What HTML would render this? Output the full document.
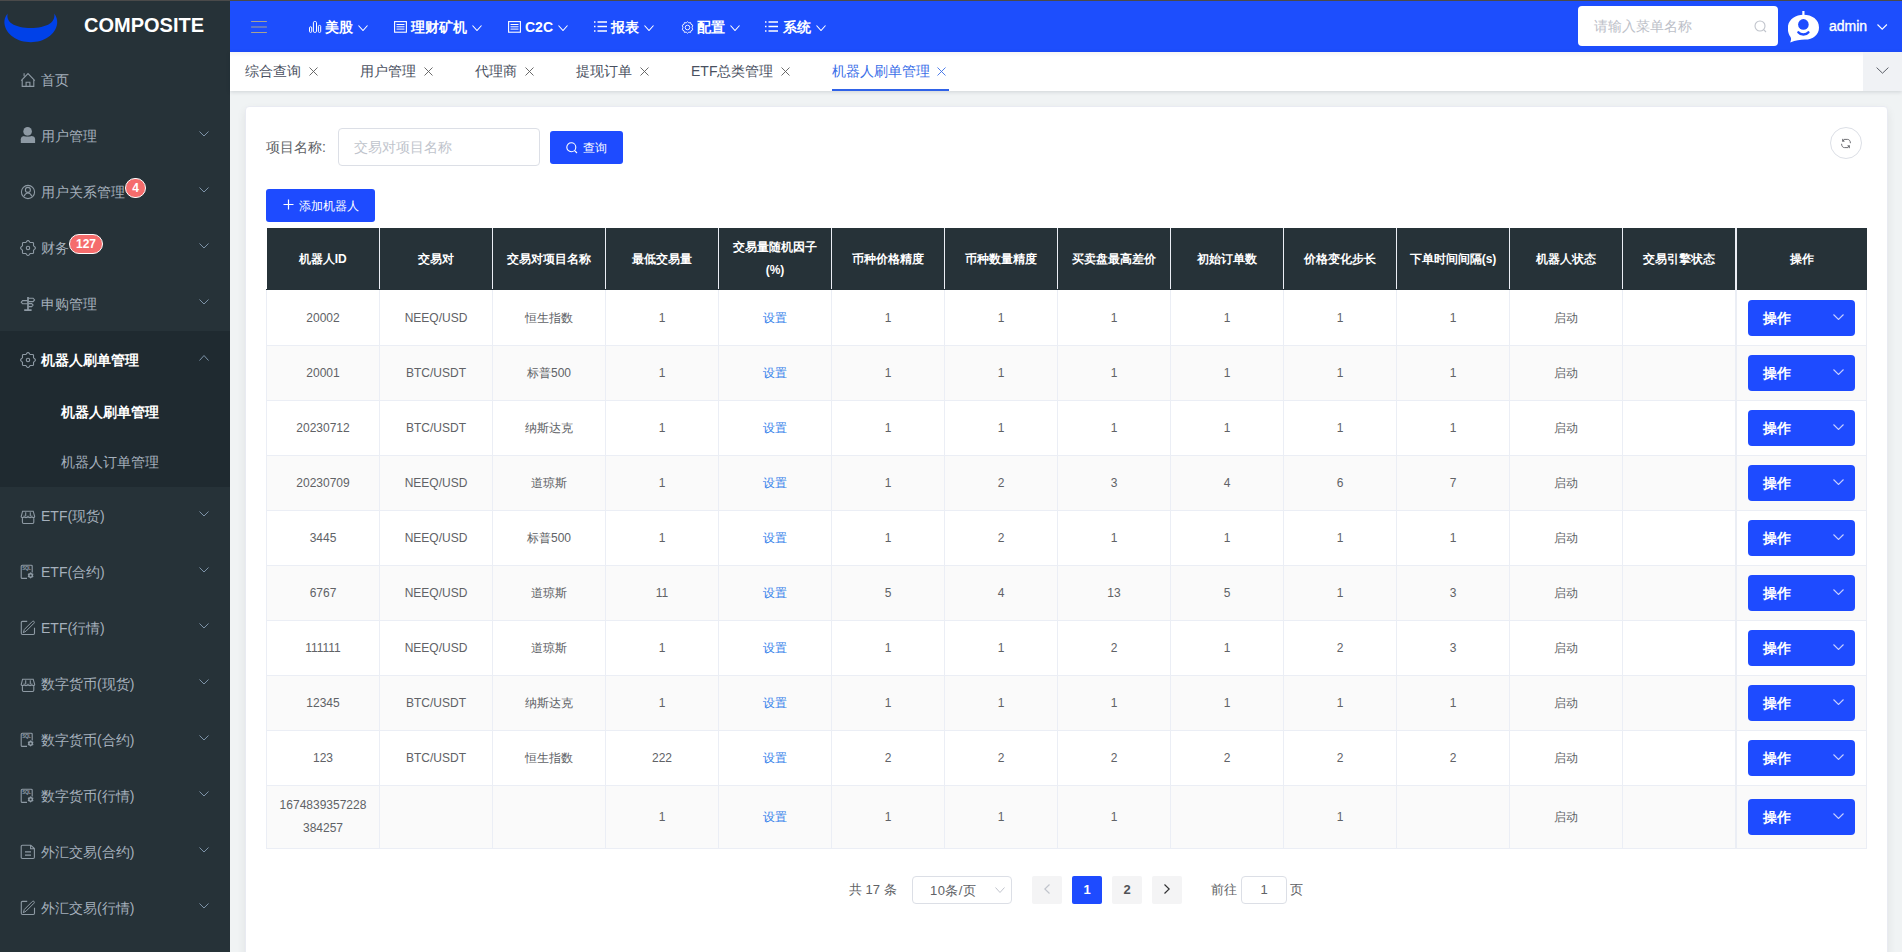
<!DOCTYPE html>
<html><head><meta charset="utf-8">
<style>
*{box-sizing:border-box;margin:0;padding:0}
html,body{width:1902px;height:952px;overflow:hidden}
body{position:relative;background:#f0f3f4;font-family:"Liberation Sans",sans-serif;color:#606266;font-size:14px}
.abs{position:absolute}
#topline{left:0;top:0;width:1902px;height:1px;background:#4a4a4a;z-index:10}
#side{left:0;top:0;width:230px;height:952px;background:#263238}
#logo-t{left:84px;top:13px;font-weight:bold;font-size:20px;color:#fff;line-height:24px}
.mi{position:absolute;left:0;width:230px;height:56px;color:#a5b0bc;font-size:14px}
.mi svg.ic{position:absolute;left:20px}
.mi .tx{position:absolute;left:41px;top:1px;line-height:56px;white-space:nowrap}
.mi svg.ar{position:absolute;left:199px;top:24px}
.badge{position:absolute;height:20px;line-height:18px;border:1px solid #fff;border-radius:10px;background:#f56c6c;color:#fff;font-size:12px;font-weight:bold;text-align:center}
#subwrap{left:0;top:331px;width:230px;height:156px;background:#1f2a30}
.smi{position:absolute;left:61px;width:169px;height:50px;line-height:50px;font-size:14px;color:#a5b0bc;white-space:nowrap}
#hdr{left:230px;top:1px;width:1672px;height:51px;background:#1d4efd}
.nav{position:absolute;top:1px;height:51px;line-height:51px;color:#fff;font-weight:bold;font-size:14px;white-space:nowrap}
.nav svg{position:absolute}
#tabs{left:230px;top:52px;width:1672px;height:39px;background:linear-gradient(#f5f5f5,#fff 5px);box-shadow:0 1px 4px rgba(0,21,41,.14)}
.tab{position:absolute;top:0;height:39px;line-height:38px;font-size:14px;color:#495060;white-space:nowrap}
.tab svg{position:absolute;top:15px}
svg{display:block}
#card{left:245px;top:106px;width:1643px;height:860px;background:#fff;border:1px solid #e9ebf2;border-radius:4px;box-shadow:0 4px 10px rgba(0,0,0,.07)}
.lbl{position:absolute;font-size:14px;color:#606266;white-space:nowrap}
.inp{position:absolute;border:1px solid #dcdfe6;border-radius:4px;background:#fff}
.btn{position:absolute;background:#1e4bff;border-radius:3px;color:#fff;font-size:12px;white-space:nowrap}
table{position:absolute;left:266px;top:228px;border-collapse:collapse;table-layout:fixed;font-size:12px;color:#606266}
th{background:#263238;color:#fff;font-weight:bold;border-left:1px solid #ebeef5;border-bottom:1px solid #263238;height:61px;padding:2px 6px 0;line-height:23px;text-align:center}
th:first-child{border-left:none}
th:last-child{border-left:2px solid #ebeef5}
td.o{border-left:2px solid #ebeef5}
td{border:1px solid #ebeef5;text-align:center;line-height:23px;padding:10px 10px 8px;height:55px;word-break:break-all}
td.o{padding:9px 10px 0;vertical-align:top}
tr.r1 td.o{padding-top:10px}
tr.l2 td.o{padding-top:13px}
tr.r1 td{height:56px}
tr.st td{background:#fafafa}
tr.l2 td{line-height:22.6px;padding-top:8px;padding-bottom:7px;height:63px}
td.lk{color:#3380ea}
.op{display:inline-block;position:relative;width:107px;height:36px;background:#1e4bff;border-radius:4px;color:#fff;font-size:14px;font-weight:bold;text-align:left;line-height:36px;padding-left:15px;vertical-align:middle}
.op svg{position:absolute;left:85px;top:14px}
.pg{position:absolute;top:876px;height:28px;line-height:28px;font-size:13px;color:#606266;white-space:nowrap}
.pb{position:absolute;top:876px;width:30px;height:28px;line-height:28px;background:#f4f4f5;border-radius:2px;text-align:center;font-size:13px;font-weight:bold;color:#303133}
</style></head>
<body>
<div id="topline" class="abs"></div>
<div id="side" class="abs">
<svg class="abs" style="left:4px;top:13px" width="56" height="31" viewBox="0 0 56 31"><path d="M3.6 0.6 C1 4 0.2 7 0.4 10 C1.5 22 14 29.2 26.8 29.2 C39.5 29.2 52 22 53.2 10 C53.4 7 52.6 4 50.3 0.6 C50.8 4 50 8 46 10.5 C41 13.8 34 15 26.8 15 C19.5 15 12.5 13.8 7.7 10.5 C3.6 8 3 4 3.6 0.6 Z" fill="#0041e8"/></svg>
<div id="logo-t" class="abs">COMPOSITE</div>
<div id="subwrap" class="abs"></div>
<div class="mi" style="top:51px"><svg class="ic" style="top:21px" width="17" height="17" viewBox="0 0 17 17"><path d="M1.2 8.6 L8 1.6 L14.8 8.6 M2.2 8 V14.4 H13.8 V8 M6.1 14.4 V10.2 H9.9 V14.4 M4.1 1.2 V4.2" fill="none" stroke="#8e9aa4" stroke-width="1.1"/></svg><div class="tx">首页</div></div>
<div class="mi" style="top:107px"><svg class="ic" style="top:20px" width="17" height="17" viewBox="0 0 17 17"><circle cx="7.6" cy="4.4" r="4.3" fill="#8e9aa4"/><path d="M0.8 16 V12.2 C0.8 9.6 2.6 8.9 4.6 8.9 H10.9 C12.9 8.9 15.1 9.6 15.1 12.2 V16 Z" fill="#8e9aa4"/><path d="M3.5 8.5 C5 9.6 10 9.6 11.8 8.5" fill="none" stroke="#263238" stroke-width=".8"/></svg><div class="tx">用户管理</div><svg class="ar" width="10" height="6" viewBox="0 0 10 6"><path d="M0.5 0.5 L5 5 L9.5 0.5" fill="none" stroke="#7d93a8" stroke-width="1"/></svg></div>
<div class="mi" style="top:163px"><svg class="ic" style="top:21px" width="17" height="17" viewBox="0 0 17 17"><circle cx="8" cy="8" r="6.6" fill="none" stroke="#8e9aa4" stroke-width="1.1"/><circle cx="7.9" cy="5.9" r="2.5" fill="none" stroke="#8e9aa4" stroke-width="1.1"/><path d="M4.1 12.2 C5 9.8 6.4 9 7.9 9 C9.4 9 10.9 9.8 11.8 12.2" fill="none" stroke="#8e9aa4" stroke-width="1.1"/></svg><div class="tx">用户关系管理</div><svg class="ar" width="10" height="6" viewBox="0 0 10 6"><path d="M0.5 0.5 L5 5 L9.5 0.5" fill="none" stroke="#7d93a8" stroke-width="1"/></svg></div>
<div class="mi" style="top:219px"><svg class="ic" style="top:21px" width="17" height="17" viewBox="0 0 17 17"><path d="M8.00 0.60 L8.71 0.84 L9.31 1.43 L9.80 2.06 L10.30 2.46 L10.93 2.53 L11.72 2.43 L12.56 2.44 L13.23 2.77 L13.56 3.44 L13.57 4.28 L13.47 5.07 L13.54 5.70 L13.94 6.20 L14.57 6.69 L15.16 7.29 L15.40 8.00 L15.16 8.71 L14.57 9.31 L13.94 9.80 L13.54 10.30 L13.47 10.93 L13.57 11.72 L13.56 12.56 L13.23 13.23 L12.56 13.56 L11.72 13.57 L10.93 13.47 L10.30 13.54 L9.80 13.94 L9.31 14.57 L8.71 15.16 L8.00 15.40 L7.29 15.16 L6.69 14.57 L6.20 13.94 L5.70 13.54 L5.07 13.47 L4.28 13.57 L3.44 13.56 L2.77 13.23 L2.44 12.56 L2.43 11.72 L2.53 10.93 L2.46 10.30 L2.06 9.80 L1.43 9.31 L0.84 8.71 L0.60 8.00 L0.84 7.29 L1.43 6.69 L2.06 6.20 L2.46 5.70 L2.53 5.07 L2.43 4.28 L2.44 3.44 L2.77 2.77 L3.44 2.44 L4.28 2.43 L5.07 2.53 L5.70 2.46 L6.20 2.06 L6.69 1.43 L7.29 0.84 L8.00 0.60Z" fill="none" stroke="#8e9aa4" stroke-width="1.1"/><circle cx="8" cy="8" r="1.7" fill="none" stroke="#8e9aa4" stroke-width="1.1"/></svg><div class="tx">财务</div><svg class="ar" width="10" height="6" viewBox="0 0 10 6"><path d="M0.5 0.5 L5 5 L9.5 0.5" fill="none" stroke="#7d93a8" stroke-width="1"/></svg></div>
<div class="mi" style="top:275px"><svg class="ic" style="top:21px" width="17" height="17" viewBox="0 0 17 17"><path d="M8 1 V14 M4.2 14.2 H11.6" fill="none" stroke="#8e9aa4" stroke-width="1.7"/><path d="M7.6 4.6 H2.6 L1.2 6.2 L2.6 7.8 H7.6 M8.4 2.2 H13.1 L14.6 3.9 L13.1 5.6 H8.4 M8.4 7.6 H11.7 L13.1 9.1 L11.7 10.6 H8.4" fill="none" stroke="#8e9aa4" stroke-width="1.1"/></svg><div class="tx">申购管理</div><svg class="ar" width="10" height="6" viewBox="0 0 10 6"><path d="M0.5 0.5 L5 5 L9.5 0.5" fill="none" stroke="#7d93a8" stroke-width="1"/></svg></div>
<div class="mi" style="top:331px"><svg class="ic" style="top:21px" width="17" height="17" viewBox="0 0 17 17"><path d="M8.00 0.60 L8.71 0.84 L9.31 1.43 L9.80 2.06 L10.30 2.46 L10.93 2.53 L11.72 2.43 L12.56 2.44 L13.23 2.77 L13.56 3.44 L13.57 4.28 L13.47 5.07 L13.54 5.70 L13.94 6.20 L14.57 6.69 L15.16 7.29 L15.40 8.00 L15.16 8.71 L14.57 9.31 L13.94 9.80 L13.54 10.30 L13.47 10.93 L13.57 11.72 L13.56 12.56 L13.23 13.23 L12.56 13.56 L11.72 13.57 L10.93 13.47 L10.30 13.54 L9.80 13.94 L9.31 14.57 L8.71 15.16 L8.00 15.40 L7.29 15.16 L6.69 14.57 L6.20 13.94 L5.70 13.54 L5.07 13.47 L4.28 13.57 L3.44 13.56 L2.77 13.23 L2.44 12.56 L2.43 11.72 L2.53 10.93 L2.46 10.30 L2.06 9.80 L1.43 9.31 L0.84 8.71 L0.60 8.00 L0.84 7.29 L1.43 6.69 L2.06 6.20 L2.46 5.70 L2.53 5.07 L2.43 4.28 L2.44 3.44 L2.77 2.77 L3.44 2.44 L4.28 2.43 L5.07 2.53 L5.70 2.46 L6.20 2.06 L6.69 1.43 L7.29 0.84 L8.00 0.60Z" fill="none" stroke="#8e9aa4" stroke-width="1.1"/><circle cx="8" cy="8" r="1.7" fill="none" stroke="#8e9aa4" stroke-width="1.1"/></svg><div class="tx" style="color:#fff;font-weight:bold">机器人刷单管理</div><svg class="ar" width="10" height="6" viewBox="0 0 10 6"><path d="M0.5 5.5 L5 0.5 L9.5 5.5" fill="none" stroke="#7d93a8" stroke-width="1"/></svg></div>
<div class="smi" style="top:387px;color:#fff;font-weight:bold">机器人刷单管理</div>
<div class="smi" style="top:437px">机器人订单管理</div>
<div class="mi" style="top:487px"><svg class="ic" style="top:22px" width="17" height="17" viewBox="0 0 17 17"><path d="M2.6 2.2 H13.2 L14.7 7.6 C14.7 8.9 12.2 8.9 11.9 7.6 C11.5 8.9 8.6 8.9 8 7.6 C7.4 8.9 4.5 8.9 4.1 7.6 C3.8 8.9 1.2 8.9 1.2 7.6 Z M2.4 9.2 V13.3 C2.4 14 2.9 14.5 3.6 14.5 H12.6 C13.3 14.5 13.8 14 13.8 13.3 V9.2 M5.7 3.2 V7.6 M10.3 3.2 V7.6" fill="none" stroke="#8e9aa4" stroke-width="1.1"/></svg><div class="tx">ETF(现货)</div><svg class="ar" width="10" height="6" viewBox="0 0 10 6"><path d="M0.5 0.5 L5 5 L9.5 0.5" fill="none" stroke="#7d93a8" stroke-width="1"/></svg></div>
<div class="mi" style="top:543px"><svg class="ic" style="top:21px" width="17" height="17" viewBox="0 0 17 17"><path d="M12.2 8.5 V2.2 C12.2 1.6 11.8 1.2 11.2 1.2 H2.3 C1.7 1.2 1.2 1.6 1.2 2.2 V13.4 C1.2 14 1.7 14.4 2.3 14.4 H7" fill="none" stroke="#8e9aa4" stroke-width="1.1"/><text x="2.3" y="6.2" font-size="4.6" font-family="Liberation Sans" font-weight="bold" fill="#8e9aa4" letter-spacing="-.3">SQL</text><path d="M10.60 8.30 L10.99 8.43 L11.31 8.74 L11.56 9.09 L11.80 9.32 L12.12 9.41 L12.54 9.46 L12.98 9.58 L13.28 9.85 L13.37 10.25 L13.26 10.69 L13.08 11.07 L13.00 11.40 L13.08 11.73 L13.26 12.11 L13.37 12.55 L13.28 12.95 L12.98 13.22 L12.54 13.34 L12.12 13.39 L11.80 13.48 L11.56 13.71 L11.31 14.06 L10.99 14.37 L10.60 14.50 L10.21 14.37 L9.89 14.06 L9.64 13.71 L9.40 13.48 L9.08 13.39 L8.66 13.34 L8.22 13.22 L7.92 12.95 L7.83 12.55 L7.94 12.11 L8.12 11.73 L8.20 11.40 L8.12 11.07 L7.94 10.69 L7.83 10.25 L7.92 9.85 L8.22 9.58 L8.66 9.46 L9.08 9.41 L9.40 9.32 L9.64 9.09 L9.89 8.74 L10.21 8.43 L10.60 8.30Z" fill="#8e9aa4"/><circle cx="10.6" cy="11.4" r="1" fill="#263238"/></svg><div class="tx">ETF(合约)</div><svg class="ar" width="10" height="6" viewBox="0 0 10 6"><path d="M0.5 0.5 L5 5 L9.5 0.5" fill="none" stroke="#7d93a8" stroke-width="1"/></svg></div>
<div class="mi" style="top:599px"><svg class="ic" style="top:21px" width="17" height="17" viewBox="0 0 17 17"><path d="M7.2 1.4 H2.5 C1.8 1.4 1.3 1.9 1.3 2.6 V13.3 C1.3 14 1.8 14.5 2.5 14.5 H13.3 C14 14.5 14.5 14 14.5 13.3 V7.8" fill="none" stroke="#8e9aa4" stroke-width="1.1"/><path d="M12.35 1.45 C12.8 1 13.6 1 14.05 1.45 C14.5 1.9 14.5 2.7 14.05 3.15 L6.05 11.15 L3.3 12.7 L4.35 9.45 Z" fill="none" stroke="#8e9aa4" stroke-width="1"/></svg><div class="tx">ETF(行情)</div><svg class="ar" width="10" height="6" viewBox="0 0 10 6"><path d="M0.5 0.5 L5 5 L9.5 0.5" fill="none" stroke="#7d93a8" stroke-width="1"/></svg></div>
<div class="mi" style="top:655px"><svg class="ic" style="top:22px" width="17" height="17" viewBox="0 0 17 17"><path d="M2.6 2.2 H13.2 L14.7 7.6 C14.7 8.9 12.2 8.9 11.9 7.6 C11.5 8.9 8.6 8.9 8 7.6 C7.4 8.9 4.5 8.9 4.1 7.6 C3.8 8.9 1.2 8.9 1.2 7.6 Z M2.4 9.2 V13.3 C2.4 14 2.9 14.5 3.6 14.5 H12.6 C13.3 14.5 13.8 14 13.8 13.3 V9.2 M5.7 3.2 V7.6 M10.3 3.2 V7.6" fill="none" stroke="#8e9aa4" stroke-width="1.1"/></svg><div class="tx">数字货币(现货)</div><svg class="ar" width="10" height="6" viewBox="0 0 10 6"><path d="M0.5 0.5 L5 5 L9.5 0.5" fill="none" stroke="#7d93a8" stroke-width="1"/></svg></div>
<div class="mi" style="top:711px"><svg class="ic" style="top:21px" width="17" height="17" viewBox="0 0 17 17"><path d="M12.2 8.5 V2.2 C12.2 1.6 11.8 1.2 11.2 1.2 H2.3 C1.7 1.2 1.2 1.6 1.2 2.2 V13.4 C1.2 14 1.7 14.4 2.3 14.4 H7" fill="none" stroke="#8e9aa4" stroke-width="1.1"/><text x="2.3" y="6.2" font-size="4.6" font-family="Liberation Sans" font-weight="bold" fill="#8e9aa4" letter-spacing="-.3">SQL</text><path d="M10.60 8.30 L10.99 8.43 L11.31 8.74 L11.56 9.09 L11.80 9.32 L12.12 9.41 L12.54 9.46 L12.98 9.58 L13.28 9.85 L13.37 10.25 L13.26 10.69 L13.08 11.07 L13.00 11.40 L13.08 11.73 L13.26 12.11 L13.37 12.55 L13.28 12.95 L12.98 13.22 L12.54 13.34 L12.12 13.39 L11.80 13.48 L11.56 13.71 L11.31 14.06 L10.99 14.37 L10.60 14.50 L10.21 14.37 L9.89 14.06 L9.64 13.71 L9.40 13.48 L9.08 13.39 L8.66 13.34 L8.22 13.22 L7.92 12.95 L7.83 12.55 L7.94 12.11 L8.12 11.73 L8.20 11.40 L8.12 11.07 L7.94 10.69 L7.83 10.25 L7.92 9.85 L8.22 9.58 L8.66 9.46 L9.08 9.41 L9.40 9.32 L9.64 9.09 L9.89 8.74 L10.21 8.43 L10.60 8.30Z" fill="#8e9aa4"/><circle cx="10.6" cy="11.4" r="1" fill="#263238"/></svg><div class="tx">数字货币(合约)</div><svg class="ar" width="10" height="6" viewBox="0 0 10 6"><path d="M0.5 0.5 L5 5 L9.5 0.5" fill="none" stroke="#7d93a8" stroke-width="1"/></svg></div>
<div class="mi" style="top:767px"><svg class="ic" style="top:21px" width="17" height="17" viewBox="0 0 17 17"><path d="M12.2 8.5 V2.2 C12.2 1.6 11.8 1.2 11.2 1.2 H2.3 C1.7 1.2 1.2 1.6 1.2 2.2 V13.4 C1.2 14 1.7 14.4 2.3 14.4 H7" fill="none" stroke="#8e9aa4" stroke-width="1.1"/><text x="2.3" y="6.2" font-size="4.6" font-family="Liberation Sans" font-weight="bold" fill="#8e9aa4" letter-spacing="-.3">SQL</text><path d="M10.60 8.30 L10.99 8.43 L11.31 8.74 L11.56 9.09 L11.80 9.32 L12.12 9.41 L12.54 9.46 L12.98 9.58 L13.28 9.85 L13.37 10.25 L13.26 10.69 L13.08 11.07 L13.00 11.40 L13.08 11.73 L13.26 12.11 L13.37 12.55 L13.28 12.95 L12.98 13.22 L12.54 13.34 L12.12 13.39 L11.80 13.48 L11.56 13.71 L11.31 14.06 L10.99 14.37 L10.60 14.50 L10.21 14.37 L9.89 14.06 L9.64 13.71 L9.40 13.48 L9.08 13.39 L8.66 13.34 L8.22 13.22 L7.92 12.95 L7.83 12.55 L7.94 12.11 L8.12 11.73 L8.20 11.40 L8.12 11.07 L7.94 10.69 L7.83 10.25 L7.92 9.85 L8.22 9.58 L8.66 9.46 L9.08 9.41 L9.40 9.32 L9.64 9.09 L9.89 8.74 L10.21 8.43 L10.60 8.30Z" fill="#8e9aa4"/><circle cx="10.6" cy="11.4" r="1" fill="#263238"/></svg><div class="tx">数字货币(行情)</div><svg class="ar" width="10" height="6" viewBox="0 0 10 6"><path d="M0.5 0.5 L5 5 L9.5 0.5" fill="none" stroke="#7d93a8" stroke-width="1"/></svg></div>
<div class="mi" style="top:823px"><svg class="ic" style="top:21px" width="17" height="17" viewBox="0 0 17 17"><path d="M2.4 1.2 H10.8 L14.4 4.6 V13.3 C14.4 14 13.9 14.5 13.2 14.5 H2.4 C1.7 14.5 1.2 14 1.2 13.3 V2.4 C1.2 1.7 1.7 1.2 2.4 1.2 Z M10.6 1.5 V4.8 H14" fill="none" stroke="#8e9aa4" stroke-width="1.1"/><path d="M5 7.8 H11 M5 11.1 H11" fill="none" stroke="#8e9aa4" stroke-width="1.3"/></svg><div class="tx">外汇交易(合约)</div><svg class="ar" width="10" height="6" viewBox="0 0 10 6"><path d="M0.5 0.5 L5 5 L9.5 0.5" fill="none" stroke="#7d93a8" stroke-width="1"/></svg></div>
<div class="mi" style="top:879px"><svg class="ic" style="top:21px" width="17" height="17" viewBox="0 0 17 17"><path d="M7.2 1.4 H2.5 C1.8 1.4 1.3 1.9 1.3 2.6 V13.3 C1.3 14 1.8 14.5 2.5 14.5 H13.3 C14 14.5 14.5 14 14.5 13.3 V7.8" fill="none" stroke="#8e9aa4" stroke-width="1.1"/><path d="M12.35 1.45 C12.8 1 13.6 1 14.05 1.45 C14.5 1.9 14.5 2.7 14.05 3.15 L6.05 11.15 L3.3 12.7 L4.35 9.45 Z" fill="none" stroke="#8e9aa4" stroke-width="1"/></svg><div class="tx">外汇交易(行情)</div><svg class="ar" width="10" height="6" viewBox="0 0 10 6"><path d="M0.5 0.5 L5 5 L9.5 0.5" fill="none" stroke="#7d93a8" stroke-width="1"/></svg></div>
<div class="badge" style="left:125px;top:178px;width:21px">4</div>
<div class="badge" style="left:69px;top:234px;width:34px">127</div>
</div>
<div id="hdr" class="abs">
<svg class="abs" style="left:21px;top:19px" width="16" height="14" viewBox="0 0 16 14"><path d="M0.5 1.5 H15.5 M0.5 7 H15.5 M0.5 12.5 H15.5" stroke="#a8a290" stroke-width="1" stroke-linecap="round"/></svg>
<div class="nav" style="left:78px"><svg width="14" height="13" viewBox="0 0 14 13" style="left:0;top:19px"><rect x="1.5" y="5.8" width="2.2" height="5.6" rx="1.1" fill="none" stroke="#ffffff" stroke-width="1"/><rect x="5.4" y="0.5" width="3.1" height="10.9" rx="1.2" fill="none" stroke="#ffffff" stroke-width="1"/><rect x="10.4" y="4.4" width="2.3" height="7" rx="1" fill="none" stroke="#ffffff" stroke-width="1"/></svg><span style="position:absolute;left:17px">美股</span><svg width="10" height="6" viewBox="0 0 10 6" style="left:50px;top:23px"><path d="M0.5 0.5 L5.0 5.5 L9.5 0.5" fill="none" stroke="#ffffff" stroke-width="1.1"/></svg></div>
<div class="nav" style="left:164px"><svg width="13" height="12" viewBox="0 0 13 12" style="left:0;top:19px"><rect x="0.6" y="0.6" width="11.8" height="10.6" fill="none" stroke="#ffffff" stroke-width="1.1"/><path d="M2.5 3.5 H10.5 M2.5 5.8 H10.5 M2.5 8.1 H10.5" stroke="#ffffff" stroke-width="1"/></svg><span style="position:absolute;left:17px">理财矿机</span><svg width="10" height="6" viewBox="0 0 10 6" style="left:78px;top:23px"><path d="M0.5 0.5 L5.0 5.5 L9.5 0.5" fill="none" stroke="#ffffff" stroke-width="1.1"/></svg></div>
<div class="nav" style="left:278px"><svg width="13" height="12" viewBox="0 0 13 12" style="left:0;top:19px"><rect x="0.6" y="0.6" width="11.8" height="10.6" fill="none" stroke="#ffffff" stroke-width="1.1"/><path d="M2.5 3.5 H10.5 M2.5 5.8 H10.5 M2.5 8.1 H10.5" stroke="#ffffff" stroke-width="1"/></svg><span style="position:absolute;left:17px">C2C</span><svg width="10" height="6" viewBox="0 0 10 6" style="left:50px;top:23px"><path d="M0.5 0.5 L5.0 5.5 L9.5 0.5" fill="none" stroke="#ffffff" stroke-width="1.1"/></svg></div>
<div class="nav" style="left:364px"><svg width="13" height="12" viewBox="0 0 13 12" style="left:0;top:19px"><path d="M0 1 H1.5 M3.5 1 H13 M0 5.5 H1.5 M3.5 5.5 H13 M0 10 H1.5 M3.5 10 H13" stroke="#ffffff" stroke-width="1.6"/></svg><span style="position:absolute;left:17px">报表</span><svg width="10" height="6" viewBox="0 0 10 6" style="left:50px;top:23px"><path d="M0.5 0.5 L5.0 5.5 L9.5 0.5" fill="none" stroke="#ffffff" stroke-width="1.1"/></svg></div>
<div class="nav" style="left:451px"><svg width="13" height="13" viewBox="0 0 13 13" style="left:0;top:19px"><path d="M6.5 0.7 L7.8 1.9 L9.6 1.6 L10 3.3 L11.7 4.2 L11.1 6.5 L11.7 8.8 L10 9.7 L9.6 11.4 L7.8 11.1 L6.5 12.3 L5.2 11.1 L3.4 11.4 L3 9.7 L1.3 8.8 L1.9 6.5 L1.3 4.2 L3 3.3 L3.4 1.6 L5.2 1.9 Z" fill="none" stroke="#ffffff" stroke-width=".9"/><circle cx="6.5" cy="6.5" r="2.3" fill="none" stroke="#ffffff" stroke-width=".9"/></svg><span style="position:absolute;left:16px">配置</span><svg width="10" height="6" viewBox="0 0 10 6" style="left:49px;top:23px"><path d="M0.5 0.5 L5.0 5.5 L9.5 0.5" fill="none" stroke="#ffffff" stroke-width="1.1"/></svg></div>
<div class="nav" style="left:535px"><svg width="13" height="12" viewBox="0 0 13 12" style="left:0;top:19px"><path d="M0 1 H1.5 M3.5 1 H13 M0 5.5 H1.5 M3.5 5.5 H13 M0 10 H1.5 M3.5 10 H13" stroke="#ffffff" stroke-width="1.6"/></svg><span style="position:absolute;left:18px">系统</span><svg width="10" height="6" viewBox="0 0 10 6" style="left:51px;top:23px"><path d="M0.5 0.5 L5.0 5.5 L9.5 0.5" fill="none" stroke="#ffffff" stroke-width="1.1"/></svg></div>
<div class="abs" style="left:1348px;top:5px;width:200px;height:40px;background:#fff;border-radius:4px"></div>
<div class="abs" style="left:1364px;top:6px;line-height:40px;font-size:13.5px;color:#bcc0c8;white-space:nowrap">请输入菜单名称</div>
<svg class="abs" style="left:1524px;top:19px" width="13" height="13" viewBox="0 0 13 13"><circle cx="6" cy="6" r="5" fill="none" stroke="#c0c4cc" stroke-width="1.1"/><path d="M9.6 9.6 L12 12" stroke="#c0c4cc" stroke-width="1.1"/></svg>
<svg class="abs" style="left:1558px;top:10px" width="34" height="34" viewBox="0 0 34 34"><path d="M15.4 0 V5" stroke="#fff" stroke-width="2.2"/><path d="M15.4 3.8 C24 3.8 31 8.5 31 16.5 C31 24 25 28.6 17 28.6 C12 28.6 8 29.5 2.2 31.4 C3.5 28.5 3.2 26.8 2.2 25.5 C0.5 23.3 -0.2 20 -0.2 17 C-0.2 9 7 3.8 15.4 3.8 Z" fill="#fff"/><circle cx="15.4" cy="13.4" r="5.3" fill="#1e4bff"/><path d="M10.3 21.3 C12.5 24.2 18.3 24.2 20.5 21.3" fill="none" stroke="#1e4bff" stroke-width="2.3" stroke-linecap="round"/></svg>
<div class="abs" style="left:1599px;top:0;line-height:50px;font-size:14px;color:#fff;-webkit-text-stroke:.35px #fff">admin</div>
<svg class="abs" style="left:1647px;top:23px" width="11" height="6" viewBox="0 0 11 6"><path d="M0.5 0.5 L5.2 5.2 L9.9 0.5" fill="none" stroke="#fff" stroke-width="1.1"/></svg>
</div>
<div id="tabs" class="abs">
<div class="tab" style="left:15px;color:#495060">综合查询</div>
<div class="abs" style="left:79px;top:15px;width:9px;height:9px"><svg width="9" height="9" viewBox="0 0 9 9"><path d="M0.5 0.5 L8.5 8.5 M8.5 0.5 L0.5 8.5" stroke="#5a5a5a" stroke-width="0.9"/></svg></div>
<div class="tab" style="left:130px;color:#495060">用户管理</div>
<div class="abs" style="left:194px;top:15px;width:9px;height:9px"><svg width="9" height="9" viewBox="0 0 9 9"><path d="M0.5 0.5 L8.5 8.5 M8.5 0.5 L0.5 8.5" stroke="#5a5a5a" stroke-width="0.9"/></svg></div>
<div class="tab" style="left:245px;color:#495060">代理商</div>
<div class="abs" style="left:295px;top:15px;width:9px;height:9px"><svg width="9" height="9" viewBox="0 0 9 9"><path d="M0.5 0.5 L8.5 8.5 M8.5 0.5 L0.5 8.5" stroke="#5a5a5a" stroke-width="0.9"/></svg></div>
<div class="tab" style="left:346px;color:#495060">提现订单</div>
<div class="abs" style="left:410px;top:15px;width:9px;height:9px"><svg width="9" height="9" viewBox="0 0 9 9"><path d="M0.5 0.5 L8.5 8.5 M8.5 0.5 L0.5 8.5" stroke="#5a5a5a" stroke-width="0.9"/></svg></div>
<div class="tab" style="left:461px;color:#495060">ETF总类管理</div>
<div class="abs" style="left:551px;top:15px;width:9px;height:9px"><svg width="9" height="9" viewBox="0 0 9 9"><path d="M0.5 0.5 L8.5 8.5 M8.5 0.5 L0.5 8.5" stroke="#5a5a5a" stroke-width="0.9"/></svg></div>
<div class="tab" style="left:602px;color:#3a6ee8">机器人刷单管理</div>
<div class="abs" style="left:707px;top:15px;width:9px;height:9px"><svg width="9" height="9" viewBox="0 0 9 9"><path d="M0.5 0.5 L8.5 8.5 M8.5 0.5 L0.5 8.5" stroke="#3a6ee8" stroke-width="0.9"/></svg></div>
<div class="abs" style="left:602px;top:37px;width:117px;height:2px;background:#2f62e8"></div>
<div class="abs" style="left:1633px;top:0;width:39px;height:39px;background:#f0f2f5"></div>
<svg class="abs" style="left:1646px;top:15px" width="13" height="7" viewBox="0 0 13 7"><path d="M0.6 0.6 L6.5 6.2 L12.4 0.6" fill="none" stroke="#5a5e66" stroke-width="1"/></svg>
</div>
<div id="card" class="abs"></div>
<div class="lbl" style="left:266px;top:137px;line-height:20px">项目名称:</div>
<div class="inp" style="left:338px;top:128px;width:202px;height:38px"></div>
<div class="lbl" style="left:354px;top:137px;line-height:20px;color:#c0c4cc">交易对项目名称</div>
<div class="btn" style="left:550px;top:131px;width:73px;height:33px"></div>
<svg class="abs" style="left:566px;top:142px" width="12" height="12" viewBox="0 0 12 12"><circle cx="5.3" cy="5.3" r="4.5" fill="none" stroke="#fff" stroke-width="1.1"/><path d="M8.6 8.6 L11 11" stroke="#fff" stroke-width="1.1"/></svg>
<div class="lbl" style="left:583px;top:140px;line-height:16px;font-size:12px;color:#fff;font-weight:500">查询</div>
<div class="abs" style="left:1830px;top:127px;width:32px;height:32px;border:1px solid #dcdfe6;border-radius:50%;background:#fff"></div>
<svg class="abs" style="left:1841px;top:138px" width="10" height="11" viewBox="0 0 10 11"><path d="M2.6 1.4 H6.6 C8.2 1.4 9.4 2.8 9.4 5.2 M7.4 9.6 H3.4 C1.8 9.6 0.6 8.2 0.6 5.8" fill="none" stroke="#5c5e63" stroke-width=".9"/><path d="M1.2 0.6 L1.2 3.7 L3.9 3.5 Z M8.8 10.4 L8.8 7.3 L6.1 7.5 Z" fill="#5c5e63"/></svg>
<div class="btn" style="left:266px;top:189px;width:109px;height:33px"></div>
<svg class="abs" style="left:283px;top:199px" width="11" height="11" viewBox="0 0 11 11"><path d="M5.5 0.5 V10.5 M0.5 5.5 H10.5" stroke="#fff" stroke-width="1.2"/></svg>
<div class="lbl" style="left:299px;top:198px;line-height:16px;font-size:12px;color:#fff;font-weight:500">添加机器人</div>
<table>
<colgroup>
<col style="width:113px">
<col style="width:113px">
<col style="width:113px">
<col style="width:113px">
<col style="width:113px">
<col style="width:113px">
<col style="width:113px">
<col style="width:113px">
<col style="width:113px">
<col style="width:113px">
<col style="width:113px">
<col style="width:113px">
<col style="width:113px">
<col style="width:131px">
</colgroup>
<tr><th>机器人ID</th><th>交易对</th><th>交易对项目名称</th><th>最低交易量</th><th>交易量随机因子(%)</th><th>币种价格精度</th><th>币种数量精度</th><th>买卖盘最高差价</th><th>初始订单数</th><th>价格变化步长</th><th>下单时间间隔(s)</th><th>机器人状态</th><th>交易引擎状态</th><th>操作</th></tr>
<tr class="r1"><td>20002</td><td>NEEQ/USD</td><td>恒生指数</td><td>1</td><td class="lk">设置</td><td>1</td><td>1</td><td>1</td><td>1</td><td>1</td><td>1</td><td>启动</td><td></td><td class="o"><div class="op">操作<svg width="11" height="6" viewBox="0 0 11 6"><path d="M0.5 0.5 L5.5 5.5 L10.5 0.5" fill="none" stroke="#c8cfff" stroke-width="1.1"/></svg></div></td></tr>
<tr class="st"><td>20001</td><td>BTC/USDT</td><td>标普500</td><td>1</td><td class="lk">设置</td><td>1</td><td>1</td><td>1</td><td>1</td><td>1</td><td>1</td><td>启动</td><td></td><td class="o"><div class="op">操作<svg width="11" height="6" viewBox="0 0 11 6"><path d="M0.5 0.5 L5.5 5.5 L10.5 0.5" fill="none" stroke="#c8cfff" stroke-width="1.1"/></svg></div></td></tr>
<tr><td>20230712</td><td>BTC/USDT</td><td>纳斯达克</td><td>1</td><td class="lk">设置</td><td>1</td><td>1</td><td>1</td><td>1</td><td>1</td><td>1</td><td>启动</td><td></td><td class="o"><div class="op">操作<svg width="11" height="6" viewBox="0 0 11 6"><path d="M0.5 0.5 L5.5 5.5 L10.5 0.5" fill="none" stroke="#c8cfff" stroke-width="1.1"/></svg></div></td></tr>
<tr class="st"><td>20230709</td><td>NEEQ/USD</td><td>道琼斯</td><td>1</td><td class="lk">设置</td><td>1</td><td>2</td><td>3</td><td>4</td><td>6</td><td>7</td><td>启动</td><td></td><td class="o"><div class="op">操作<svg width="11" height="6" viewBox="0 0 11 6"><path d="M0.5 0.5 L5.5 5.5 L10.5 0.5" fill="none" stroke="#c8cfff" stroke-width="1.1"/></svg></div></td></tr>
<tr><td>3445</td><td>NEEQ/USD</td><td>标普500</td><td>1</td><td class="lk">设置</td><td>1</td><td>2</td><td>1</td><td>1</td><td>1</td><td>1</td><td>启动</td><td></td><td class="o"><div class="op">操作<svg width="11" height="6" viewBox="0 0 11 6"><path d="M0.5 0.5 L5.5 5.5 L10.5 0.5" fill="none" stroke="#c8cfff" stroke-width="1.1"/></svg></div></td></tr>
<tr class="st"><td>6767</td><td>NEEQ/USD</td><td>道琼斯</td><td>11</td><td class="lk">设置</td><td>5</td><td>4</td><td>13</td><td>5</td><td>1</td><td>3</td><td>启动</td><td></td><td class="o"><div class="op">操作<svg width="11" height="6" viewBox="0 0 11 6"><path d="M0.5 0.5 L5.5 5.5 L10.5 0.5" fill="none" stroke="#c8cfff" stroke-width="1.1"/></svg></div></td></tr>
<tr><td>111111</td><td>NEEQ/USD</td><td>道琼斯</td><td>1</td><td class="lk">设置</td><td>1</td><td>1</td><td>2</td><td>1</td><td>2</td><td>3</td><td>启动</td><td></td><td class="o"><div class="op">操作<svg width="11" height="6" viewBox="0 0 11 6"><path d="M0.5 0.5 L5.5 5.5 L10.5 0.5" fill="none" stroke="#c8cfff" stroke-width="1.1"/></svg></div></td></tr>
<tr class="st"><td>12345</td><td>BTC/USDT</td><td>纳斯达克</td><td>1</td><td class="lk">设置</td><td>1</td><td>1</td><td>1</td><td>1</td><td>1</td><td>1</td><td>启动</td><td></td><td class="o"><div class="op">操作<svg width="11" height="6" viewBox="0 0 11 6"><path d="M0.5 0.5 L5.5 5.5 L10.5 0.5" fill="none" stroke="#c8cfff" stroke-width="1.1"/></svg></div></td></tr>
<tr><td>123</td><td>BTC/USDT</td><td>恒生指数</td><td>222</td><td class="lk">设置</td><td>2</td><td>2</td><td>2</td><td>2</td><td>2</td><td>2</td><td>启动</td><td></td><td class="o"><div class="op">操作<svg width="11" height="6" viewBox="0 0 11 6"><path d="M0.5 0.5 L5.5 5.5 L10.5 0.5" fill="none" stroke="#c8cfff" stroke-width="1.1"/></svg></div></td></tr>
<tr class="st l2"><td>1674839357228384257</td><td></td><td></td><td>1</td><td class="lk">设置</td><td>1</td><td>1</td><td>1</td><td></td><td>1</td><td></td><td>启动</td><td></td><td class="o"><div class="op">操作<svg width="11" height="6" viewBox="0 0 11 6"><path d="M0.5 0.5 L5.5 5.5 L10.5 0.5" fill="none" stroke="#c8cfff" stroke-width="1.1"/></svg></div></td></tr>
</table>
<div class="pg" style="left:849px">共 17 条</div>
<div class="inp" style="left:912px;top:876px;width:100px;height:28px"></div>
<div class="pg" style="left:930px;top:877px;letter-spacing:.4px">10条/页</div>
<svg class="abs" style="left:995px;top:887px" width="10" height="6" viewBox="0 0 10 6"><path d="M0.5 0.5 L5.0 5.5 L9.5 0.5" fill="none" stroke="#c0c4cc" stroke-width="1"/></svg>
<div class="pb" style="left:1032px"></div>
<svg class="abs" style="left:1044px;top:884px" width="6" height="10" viewBox="0 0 6 10"><path d="M5.5 0.5 L0.8 5 L5.5 9.5" fill="none" stroke="#c0c4cc" stroke-width="1.2"/></svg>
<div class="pb" style="left:1072px;background:#1e4bff;color:#fff">1</div>
<div class="pb" style="left:1112px;color:#505256">2</div>
<div class="pb" style="left:1152px"></div>
<svg class="abs" style="left:1164px;top:884px" width="6" height="10" viewBox="0 0 6 10"><path d="M0.5 0.5 L5.2 5 L0.5 9.5" fill="none" stroke="#303133" stroke-width="1.2"/></svg>
<div class="pg" style="left:1211px">前往</div>
<div class="inp" style="left:1241px;top:876px;width:46px;height:28px"></div>
<div class="pg" style="left:1241px;width:46px;text-align:center">1</div>
<div class="pg" style="left:1290px">页</div>
</body></html>
